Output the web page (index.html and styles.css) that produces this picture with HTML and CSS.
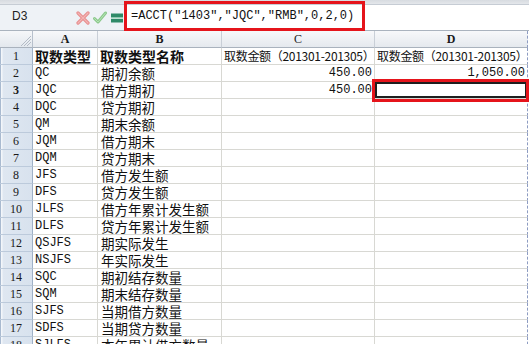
FILE: index.html
```html
<!DOCTYPE html>
<html>
<head>
<meta charset="utf-8">
<link rel="stylesheet" href="styles.css">
</head>
<body>
<div class="app">
  <div class="topstrip"></div>
  <div class="fbar">
    <div class="namebox">D3</div>
    <div class="fbtns">
      <svg class="ic" width="14" height="14" viewBox="0 0 14 14"><path d="M2 2 L12 12 M12 2 L2 12" stroke="#e78e8e" stroke-width="3.2" stroke-linecap="round"/><path d="M2 2 L12 12 M12 2 L2 12" stroke="#f3b4b4" stroke-width="1.2" stroke-linecap="round"/></svg>
      <svg class="ic" width="14" height="14" viewBox="0 0 14 14"><path d="M1.5 7.5 L5 11 L12.5 2" fill="none" stroke="#8cc98c" stroke-width="3" stroke-linecap="round" stroke-linejoin="round"/><path d="M1.5 7.5 L5 11 L12.5 2" fill="none" stroke="#b6e3b6" stroke-width="1" stroke-linecap="round" stroke-linejoin="round"/></svg>
      <svg class="ic" width="14" height="14" viewBox="0 0 14 14"><rect x="1" y="2.5" width="12" height="3.5" fill="#2f8a68"/><rect x="1" y="6" width="12" height="1.5" fill="#8fc9b0"/><rect x="1" y="8" width="12" height="3.5" fill="#2f8a68"/></svg>
    </div>
    <div class="finput">=ACCT("1403","JQC","RMB",0,2,0)</div>
  </div>
  <div class="sheet">
    <div class="corner"><svg width="12" height="12" viewBox="0 0 12 12"><path d="M11 1 L1 11 M11 4 L4 11 M11 7 L7 11" stroke="#b3bbc6" stroke-width="1"/></svg></div>
    <div class="ch b">A</div>
    <div class="ch b">B</div>
    <div class="ch">C</div>
    <div class="ch b">D</div>

    <div class="rh">1</div><div class="c h1">取数类型</div><div class="c h1">取数类型名称</div><div class="c h2">取数金额（201301-201305）</div><div class="c h2">取数金额（201301-201305）</div>
    <div class="rh">2</div><div class="c t">QC</div><div class="c z">期初余额</div><div class="c num">450.00</div><div class="c num">1,050.00</div>
    <div class="rh b">3</div><div class="c t">JQC</div><div class="c z">借方期初</div><div class="c num">450.00</div><div class="c sel"></div>
    <div class="rh">4</div><div class="c t">DQC</div><div class="c z">贷方期初</div><div class="c"></div><div class="c"></div>
    <div class="rh">5</div><div class="c t">QM</div><div class="c z">期末余额</div><div class="c"></div><div class="c"></div>
    <div class="rh">6</div><div class="c t">JQM</div><div class="c z">借方期末</div><div class="c"></div><div class="c"></div>
    <div class="rh">7</div><div class="c t">DQM</div><div class="c z">贷方期末</div><div class="c"></div><div class="c"></div>
    <div class="rh">8</div><div class="c t">JFS</div><div class="c z">借方发生额</div><div class="c"></div><div class="c"></div>
    <div class="rh">9</div><div class="c t">DFS</div><div class="c z">贷方发生额</div><div class="c"></div><div class="c"></div>
    <div class="rh">10</div><div class="c t">JLFS</div><div class="c z">借方年累计发生额</div><div class="c"></div><div class="c"></div>
    <div class="rh">11</div><div class="c t">DLFS</div><div class="c z">贷方年累计发生额</div><div class="c"></div><div class="c"></div>
    <div class="rh">12</div><div class="c t">QSJFS</div><div class="c z">期实际发生</div><div class="c"></div><div class="c"></div>
    <div class="rh">13</div><div class="c t">NSJFS</div><div class="c z">年实际发生</div><div class="c"></div><div class="c"></div>
    <div class="rh">14</div><div class="c t">SQC</div><div class="c z">期初结存数量</div><div class="c"></div><div class="c"></div>
    <div class="rh">15</div><div class="c t">SQM</div><div class="c z">期末结存数量</div><div class="c"></div><div class="c"></div>
    <div class="rh">16</div><div class="c t">SJFS</div><div class="c z">当期借方数量</div><div class="c"></div><div class="c"></div>
    <div class="rh">17</div><div class="c t">SDFS</div><div class="c z">当期贷方数量</div><div class="c"></div><div class="c"></div>
    <div class="rh">18</div><div class="c t">SJLFS</div><div class="c z">本年累计借方数量</div><div class="c"></div><div class="c"></div>
  </div>
  <div class="annot annot-formula"></div>
  <div class="annot annot-cell"></div>
</div>
</body>
</html>
```
FILE: styles.css
```css
html, body {
  margin: 0;
  padding: 0;
  background: #ffffff;
}
.app {
  position: relative;
  width: 529px;
  height: 344px;
  overflow: hidden;
  font-family: "Liberation Mono", "Noto Sans CJK SC", monospace;
  color: #111;
}
.topstrip {
  height: 4px;
  background: linear-gradient(#d7dbe0, #e4e7eb);
  border-bottom: 1px solid #c6ccd4;
}
.fbar {
  display: flex;
  height: 25px;
  background: #eef2f6;
  border-bottom: 1px solid #aab3be;
}
.namebox {
  width: 70px;
  box-sizing: border-box;
  padding-left: 12px;
  font-family: "Liberation Sans", sans-serif;
  font-size: 12px;
  line-height: 22px;
  color: #222;
}
.fbtns {
  width: 56px;
  display: flex;
  align-items: center;
  gap: 3px;
  padding-left: 6px;
  box-sizing: border-box;
}
.ic { display: block; flex: none; }
.finput {
  flex: 1;
  background: #ffffff;
  border-left: 1px solid #c4cad2;
  padding-left: 4px;
  font-size: 12px;
  line-height: 22px;
  color: #111;
  white-space: nowrap;
}
.sheet {
  display: grid;
  grid-template-columns: 33px 65px 124px 153px 153px;
  grid-auto-rows: 17px;
}
.sheet > div {
  box-sizing: border-box;
  border-right: 1px solid #d8d8d3;
  border-bottom: 1px solid #d8d8d3;
  white-space: nowrap;
  line-height: 16px;
}
.sheet > .corner {
  background: linear-gradient(#f6f7f9, #e3e8ee);
  border-right: 1px solid #b7c0cc;
  border-bottom: 1px solid #a9b2bd;
  display: flex;
  align-items: flex-end;
  justify-content: flex-end;
}
.sheet > .ch {
  background: linear-gradient(#f7f8fa, #e5e9ee);
  border-right: 1px solid #c9cfd7;
  border-bottom: 1px solid #a9b2bd;
  text-align: center;
  font-family: "Liberation Serif", serif;
  font-size: 12px;
  color: #1a1a1a;
}
.sheet > .rh {
  background: linear-gradient(90deg, #a9bad0 0, #a9bad0 1px, #f3f6fa 1px, #f3f6fa 2px, #dfe7f1 3px, #d8e2ee);
  border-right: 1px solid #9fb1c7;
  border-bottom: 1px solid #bccadb;
  text-align: center;
  font-family: "Liberation Serif", serif;
  font-size: 12px;
  color: #1a1a1a;
}
.b { font-weight: bold; }
.sheet > .t {
  padding-left: 2px;
  font-size: 12px;
}
.sheet > .z {
  padding-left: 3px;
  font-family: "Noto Sans CJK SC", sans-serif;
  font-size: 13.5px;
}
.sheet > .h1 {
  padding-left: 2px;
  font-family: "Noto Sans CJK SC", sans-serif;
  font-size: 14px;
  font-weight: bold;
}
.sheet > .h2 {
  padding-left: 2px;
  font-family: "Noto Sans CJK SC", sans-serif;
  font-size: 12px;
  letter-spacing: -0.3px;
}
.sheet > .num {
  text-align: right;
  padding-right: 2px;
  font-size: 12px;
}
.sheet > .sel {
  box-shadow: inset 0 0 0 2px #1e1e1e;
}
.sheet > div:nth-child(5n) {
  border-right: 1px dashed #8d9cc2;
}
.annot {
  position: absolute;
  box-sizing: border-box;
  border: 3px solid #e5141b;
}
.annot-formula {
  left: 124px;
  top: 1px;
  width: 241px;
  height: 30px;
}
.annot-cell {
  left: 372px;
  top: 79px;
  width: 157px;
  height: 23px;
}
```
